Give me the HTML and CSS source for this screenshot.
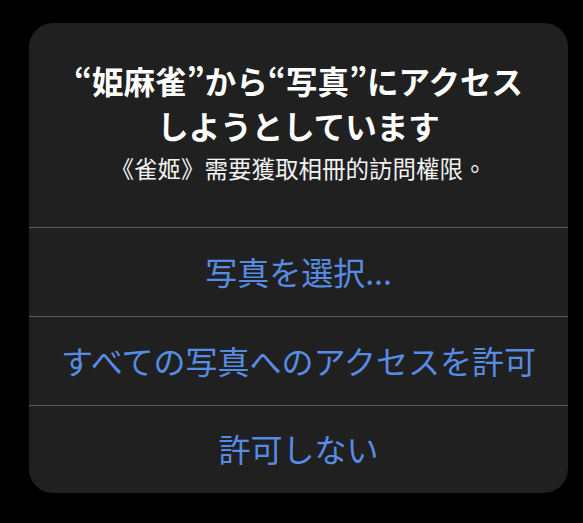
FILE: index.html
```html
<!DOCTYPE html>
<html lang="ja">
<head>
<meta charset="utf-8">
<link rel="stylesheet" href="styles.css">
</head>
<body>
<div class="alert">
  <div class="header">
    <div class="title">“姫麻雀”から“写真”にアクセス<br>しようとしています</div>
    <div class="message" lang="zh-Hant">《雀姬》需要獲取相冊的訪問權限。</div>
  </div>
  <div class="button">写真を選択...</div>
  <div class="button">すべての写真へのアクセスを許可</div>
  <div class="button last">許可しない</div>
</div>
</body>
</html>
```
FILE: styles.css
```css
html, body {
  margin: 0;
  padding: 0;
  background: #000;
}
body {
  width: 583px;
  height: 523px;
  overflow: hidden;
  font-family: "Noto Sans CJK JP", "Noto Sans", sans-serif;
}
.alert {
  margin: 23px 0 0 29px;
  width: 539px;
  background: #202020;
  border-radius: 24px;
  overflow: hidden;
}
.header {
  padding: 35px 10px 39px;
  text-align: center;
}
.title {
  color: #fff;
  font-size: 31.5px;
  font-weight: 700;
  line-height: 45px;
}
.message {
  color: #f2f2f2;
  font-family: "Noto Sans CJK TC", "Noto Sans", sans-serif;
  font-size: 23.5px;
  line-height: 40px;
}
.button {
  box-sizing: border-box;
  height: 89px;
  padding-bottom: 3px;
  border-top: 1px solid #5a5a5a;
  display: flex;
  align-items: center;
  justify-content: center;
  color: #578ce4;
  font-size: 32px;
  line-height: 1;
}
.button.last {
  height: 88px;
}
```
